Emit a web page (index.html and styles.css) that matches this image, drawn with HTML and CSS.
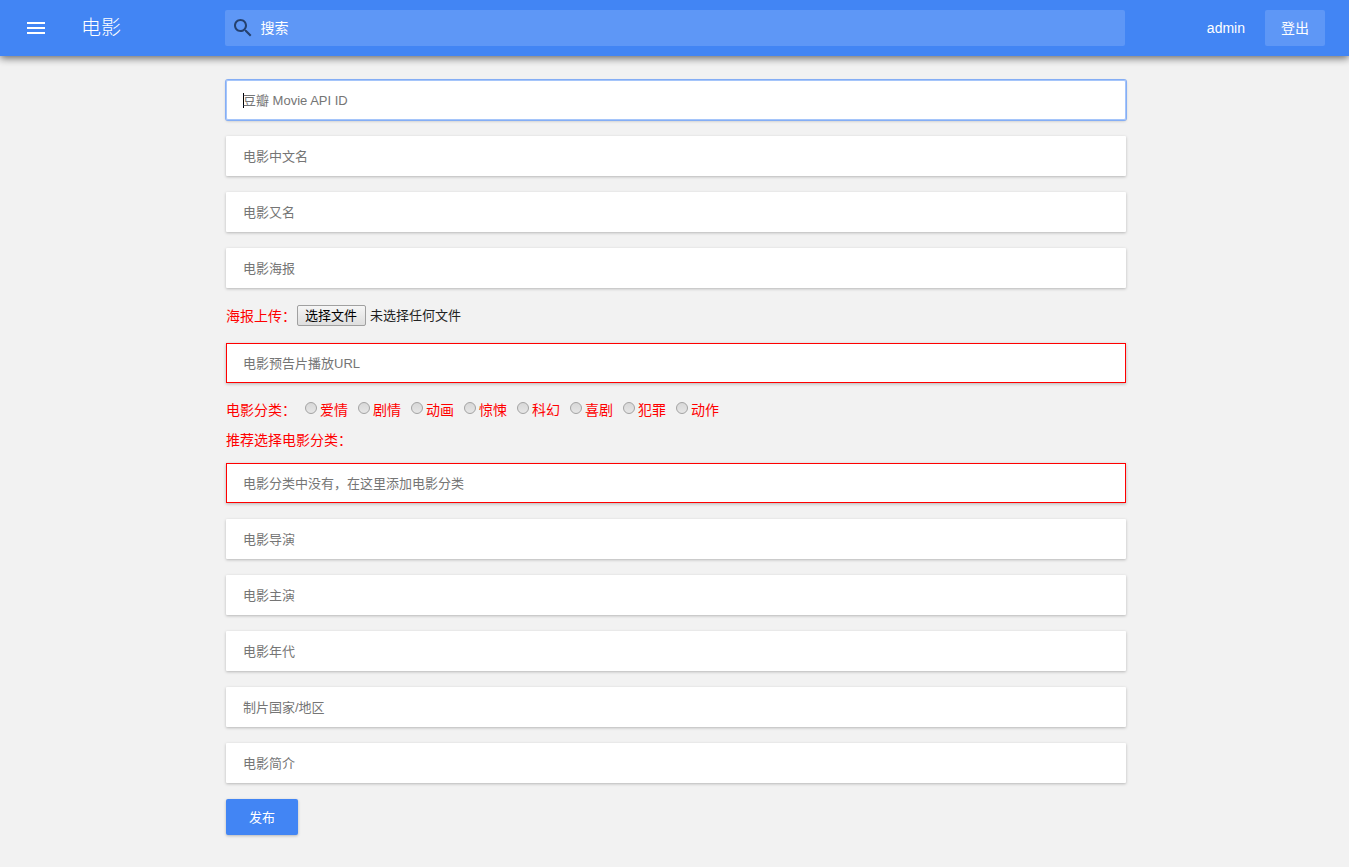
FILE: index.html
```html
<!DOCTYPE html>
<html lang="zh-CN">
<head>
<meta charset="utf-8">
<title>电影</title>
<link rel="stylesheet" href="styles.css">
</head>
<body>
<header class="topbar">
  <div class="brand">
    <button class="menu" type="button" aria-label="菜单">
      <svg width="24" height="24" viewBox="0 0 24 24"><path fill="#fff" d="M3 18h18v-2H3v2zm0-5h18v-2H3v2zm0-7v2h18V6H3z"/></svg>
    </button>
    <h1 class="title">电影</h1>
  </div>
  <form class="search">
    <label class="search-icon" for="q" aria-label="搜索">
      <svg width="24" height="24" viewBox="0 0 24 24"><path fill="#25416f" d="M15.5 14h-.79l-.28-.27C15.41 12.59 16 11.11 16 9.5 16 5.91 13.09 3 9.5 3S3 5.91 3 9.500 5.910 16 9.500 16c1.610 0 3.090-.59 4.230-1.570l.27.28v.79l5 4.990L20.490 19l-4.990-5zm-6 0C7.010 14 5 11.990 5 9.500S7.010 5 9.500 5 14 7.010 14 9.500 11.990 14 9.500 14z"/></svg>
    </label>
    <input class="search-input" id="q" type="text" placeholder="搜索">
  </form>
  <div class="account">
    <span class="user">admin</span>
    <button class="logout" type="button">登出</button>
  </div>
</header>
<main class="page">
  <form class="form">
    <input class="field field-active" type="text" placeholder="豆瓣 Movie API ID" aria-label="豆瓣 Movie API ID">
    <input class="field" type="text" placeholder="电影中文名" aria-label="电影中文名">
    <input class="field" type="text" placeholder="电影又名" aria-label="电影又名">
    <input class="field" type="text" placeholder="电影海报" aria-label="电影海报">
    <div class="upload">
      <span>海报上传：</span>
      <input class="file-input" id="poster" type="file">
      <label class="file-button" for="poster">选择文件</label>
      <span class="file-name">未选择任何文件</span>
    </div>
    <input class="field field-red" type="text" placeholder="电影预告片播放URL" aria-label="电影预告片播放URL">
    <div class="genres">
      <div class="genre-row">
        <span class="genre-label">电影分类：</span>
        <label class="genre"><input class="radio" type="radio" name="genre">爱情</label>
        <label class="genre"><input class="radio" type="radio" name="genre">剧情</label>
        <label class="genre"><input class="radio" type="radio" name="genre">动画</label>
        <label class="genre"><input class="radio" type="radio" name="genre">惊悚</label>
        <label class="genre"><input class="radio" type="radio" name="genre">科幻</label>
        <label class="genre"><input class="radio" type="radio" name="genre">喜剧</label>
        <label class="genre"><input class="radio" type="radio" name="genre">犯罪</label>
        <label class="genre"><input class="radio" type="radio" name="genre">动作</label>
      </div>
      <div class="genre-row">推荐选择电影分类：</div>
    </div>
    <input class="field field-red" type="text" placeholder="电影分类中没有，在这里添加电影分类" aria-label="添加电影分类">
    <input class="field" type="text" placeholder="电影导演" aria-label="电影导演">
    <input class="field" type="text" placeholder="电影主演" aria-label="电影主演">
    <input class="field" type="text" placeholder="电影年代" aria-label="电影年代">
    <input class="field" type="text" placeholder="制片国家/地区" aria-label="制片国家/地区">
    <input class="field" type="text" placeholder="电影简介" aria-label="电影简介">
    <button class="submit" type="submit">发布</button>
  </form>
</main>
</body>
</html>
```
FILE: styles.css
```css
* {
  box-sizing: border-box;
}

body {
  margin: 0;
  background: #f2f2f2;
  color: #222;
  font: 14px/20px "Liberation Sans", "Noto Sans CJK SC", sans-serif;
}

button,
input {
  font-family: inherit;
}

.topbar {
  display: grid;
  grid-template-columns: 1fr minmax(0, 900px) 1fr;
  align-items: center;
  height: 56px;
  background: #4285f4;
  color: #fff;
  box-shadow: 0 2px 8px rgba(0, 0, 0, 0.6);
}

.brand {
  display: flex;
  align-items: center;
  gap: 33px;
  padding-left: 24px;
}

.menu {
  display: flex;
  padding: 0;
  border: 0;
  background: none;
}

.title {
  margin: 0;
  font-size: 20px;
  line-height: 28px;
  font-weight: 300;
}

.search {
  display: flex;
  align-items: center;
  height: 36px;
  padding-left: 6px;
  border-radius: 2px;
  background: #5e97f6;
}

.search-icon {
  display: flex;
}

.search-input {
  flex: 1;
  min-width: 0;
  height: 36px;
  padding: 0 6px;
  border: 0;
  outline: 0;
  background: none;
  color: #fff;
  font-size: 14px;
}

.search-input::placeholder {
  color: #fff;
}

.account {
  display: flex;
  align-items: center;
  justify-content: flex-end;
  gap: 20px;
  padding-right: 24px;
}

.logout {
  width: 60px;
  height: 36px;
  padding: 0 0 2px;
  border: 0;
  border-radius: 2px;
  background: #5e97f6;
  color: #fff;
  font-size: 14px;
}

.page {
  padding: 24px 0 32px 3px;
}

.form {
  display: flex;
  flex-direction: column;
  gap: 16px;
  max-width: 900px;
  margin: 0 auto;
}

.field {
  width: 100%;
  height: 40px;
  padding: 0 17px;
  border: 0;
  border-radius: 1px;
  outline: 0;
  background: #fff;
  box-shadow: 0 1px 3px rgba(0, 0, 0, 0.25);
  color: #222;
  font-size: 13px;
}

.field::placeholder {
  color: #757575;
}

.field-active {
  border-radius: 2px;
  background: linear-gradient(#000, #000) 17px 13px / 1px 15px no-repeat #fff;
  box-shadow: 0 0 0 1px #85aef5, inset 0 0 0 1px #a5c5fa, 0 1px 3px rgba(0, 0, 0, 0.25);
}

.field-red {
  padding: 0 16px;
  border: 1px solid #f00;
  border-radius: 0;
}

.upload {
  display: flex;
  align-items: center;
  height: 23px;
  color: #f00;
}

.file-input {
  position: absolute;
  width: 1px;
  height: 1px;
  opacity: 0;
}

.file-button {
  height: 21px;
  margin: 0 4px 0 1px;
  padding: 0 8px 0 7px;
  border: 1px solid #a0a0a0;
  border-radius: 2px;
  background: linear-gradient(#f6f6f6, #dedede);
  color: #000;
  font-size: 13px;
  line-height: 19px;
}

.file-name {
  color: #222;
  font-size: 13px;
}

.genres {
  display: flex;
  flex-direction: column;
  gap: 16px;
  padding-top: 4px;
  color: #f00;
}

.genre-row {
  display: flex;
  align-items: center;
  gap: 10px;
  height: 14px;
}

.genre-label {
  width: 69px;
  white-space: nowrap;
}

.genre {
  display: flex;
  align-items: center;
  gap: 3px;
}

.radio {
  appearance: none;
  width: 12px;
  height: 12px;
  margin: 0 0 4px;
  border: 1px solid #a3a3a3;
  border-radius: 50%;
  background: linear-gradient(#d8d8d8, #e6e6e6);
}

.submit {
  align-self: flex-start;
  width: 72px;
  height: 36px;
  padding: 0 0 2px;
  border: 0;
  border-radius: 2px;
  background: #4285f4;
  box-shadow: 0 1px 3px rgba(0, 0, 0, 0.25);
  color: #fff;
  font-size: 13px;
}
```
